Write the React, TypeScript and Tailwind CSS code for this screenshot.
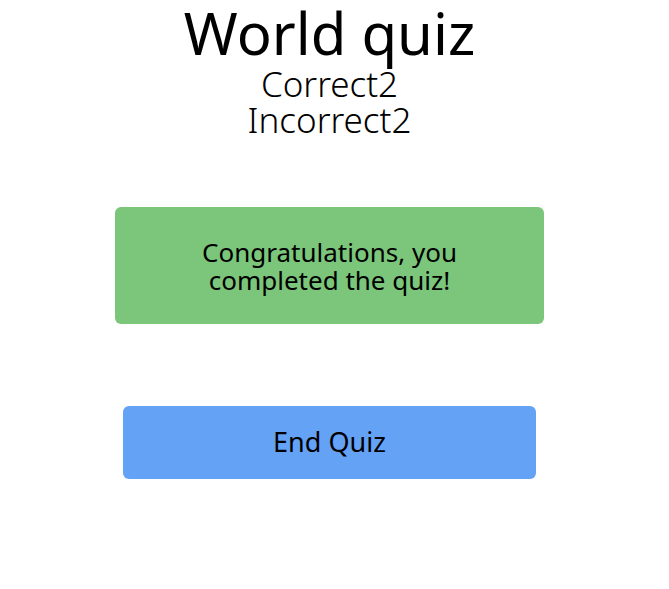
export default function App() {
  return (
    <div className="min-h-screen bg-white font-['Noto_Sans',sans-serif] text-black">
      <main className="flex flex-col items-center pr-[10px]">
        <h1 className="text-[58px] font-normal leading-[66px]">World quiz</h1>
        <p className="text-[35px] font-light leading-[36px]">Correct2</p>
        <p className="text-[35px] font-light leading-[36px]">Incorrect2</p>

        <div className="mt-[69px] flex h-[117px] w-[429px] items-center justify-center rounded-md bg-[#7bc67b] px-16 text-center">
          <p className="text-[26px] leading-[28px]">Congratulations, you completed the quiz!</p>
        </div>

        <button className="mt-[82px] h-[73px] w-[413px] rounded-md bg-[#64a2f6] text-[27px]">
          End Quiz
        </button>
      </main>
    </div>
  );
}
